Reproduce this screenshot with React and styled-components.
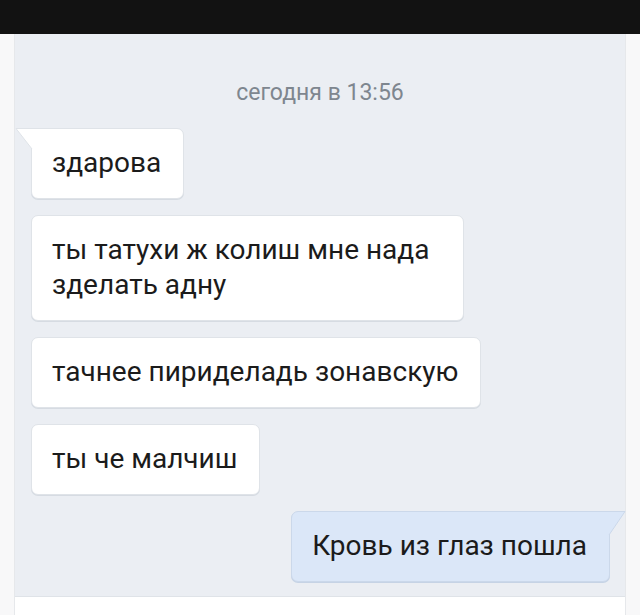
import React from "react";
import styled, { createGlobalStyle } from "styled-components";

const GlobalStyle = createGlobalStyle`
  html, body {
    margin: 0;
    padding: 0;
    background: #fafafb;
    font-family: Roboto, "Noto Sans", sans-serif;
  }
`;

const Page = styled.div`
  display: flex;
  flex-direction: column;
  width: 640px;
  height: 615px;
  overflow: hidden;
`;

const TopBar = styled.div`
  height: 34px;
  background-color: #121212;
  flex-shrink: 0;
`;

const Body = styled.div`
  display: flex;
  flex-direction: row;
  flex: 1;
`;

const SideStrip = styled.div`
  width: ${(p) => p.$w}px;
  background-color: #f8f8f9;
  border-${(p) => (p.$right ? "left" : "right")}: 1px solid #e6e8eb;
  flex-shrink: 0;
`;

const Center = styled.div`
  display: flex;
  flex-direction: column;
  flex: 1;
`;

const Chat = styled.div`
  display: flex;
  flex-direction: column;
  align-items: flex-start;
  gap: 16px;
  height: 563px;
  padding: 46px 0 0 16px;
  box-sizing: border-box;
  background-color: #ebeef3;
  border-bottom: 1px solid #dfe3e8;
`;

const Footer = styled.div`
  flex: 1;
  background-color: #ffffff;
`;

const DateLabel = styled.div`
  align-self: stretch;
  text-align: center;
  margin-left: -16px;
  font-size: 23px;
  line-height: 26px;
  color: #7e868f;
  margin-bottom: 6px;
`;

const Bubble = styled.div`
  position: relative;
  box-sizing: border-box;
  padding: 16px ${(p) => 22 + (p.$extra || 0)}px 18px 20px;
  font-size: 28px;
  line-height: 35px;
  color: #1b1b1b;
  white-space: nowrap;
  background-color: ${(p) => (p.$out ? "#dbe7f8" : "#ffffff")};
  border: 1px solid ${(p) => (p.$out ? "#cbd8ea" : "#dfe3e8")};
  box-shadow: 0 1px 0 ${(p) => (p.$out ? "#c6d3e5" : "#d6dbe2")};
  border-radius: 7px;
  border-top-left-radius: ${(p) => (p.$tail && !p.$out ? 0 : 7)}px;
  border-top-right-radius: ${(p) => (p.$tail && p.$out ? 0 : 7)}px;
  align-self: ${(p) => (p.$out ? "flex-end" : "flex-start")};
  margin-right: ${(p) => (p.$out ? 15 : 0)}px;
`;

const TailSvg = styled.svg`
  position: absolute;
  top: -1px;
  ${(p) => (p.$out ? "right: -17px;" : "left: -17px;")}
`;

const Tail = ({ out }) =>
  out ? (
    <TailSvg $out width="18" height="25" viewBox="0 0 18 25">
      <path d="M0 0.5 L17 0.5 L1 24 L0 24 Z" fill="#dbe7f8" />
      <path d="M0 0.5 L17 0.5 L1 24" fill="none" stroke="#cbd8ea" strokeWidth="1" />
    </TailSvg>
  ) : (
    <TailSvg width="18" height="22" viewBox="0 0 18 22">
      <path d="M18 0.5 L1 0.5 L17 21 L18 21 Z" fill="#ffffff" />
      <path d="M18 0.5 L1 0.5 L17 21" fill="none" stroke="#dfe3e8" strokeWidth="1" />
    </TailSvg>
  );

const messages = [
  { text: ["здарова"], tail: true },
  { text: ["ты татухи ж колиш мне нада", "зделать адну"], extra: 12 },
  { text: ["тачнее пириделадь зонавскую"] },
  { text: ["ты че малчиш"] },
  { text: ["Кровь из глаз пошла"], out: true, tail: true },
];

const App = () => (
  <>
    <GlobalStyle />
    <Page>
      <TopBar />
      <Body>
        <SideStrip $w={14} />
        <Center>
          <Chat>
            <DateLabel>сегодня в 13:56</DateLabel>
            {messages.map((m, i) => (
              <Bubble key={i} $out={m.out} $tail={m.tail} $extra={m.extra}>
                {m.tail && <Tail out={m.out} />}
                {m.text.map((line, j) => (
                  <div key={j}>{line}</div>
                ))}
              </Bubble>
            ))}
          </Chat>
          <Footer />
        </Center>
        <SideStrip $w={14} $right />
      </Body>
    </Page>
  </>
);

export default App;
